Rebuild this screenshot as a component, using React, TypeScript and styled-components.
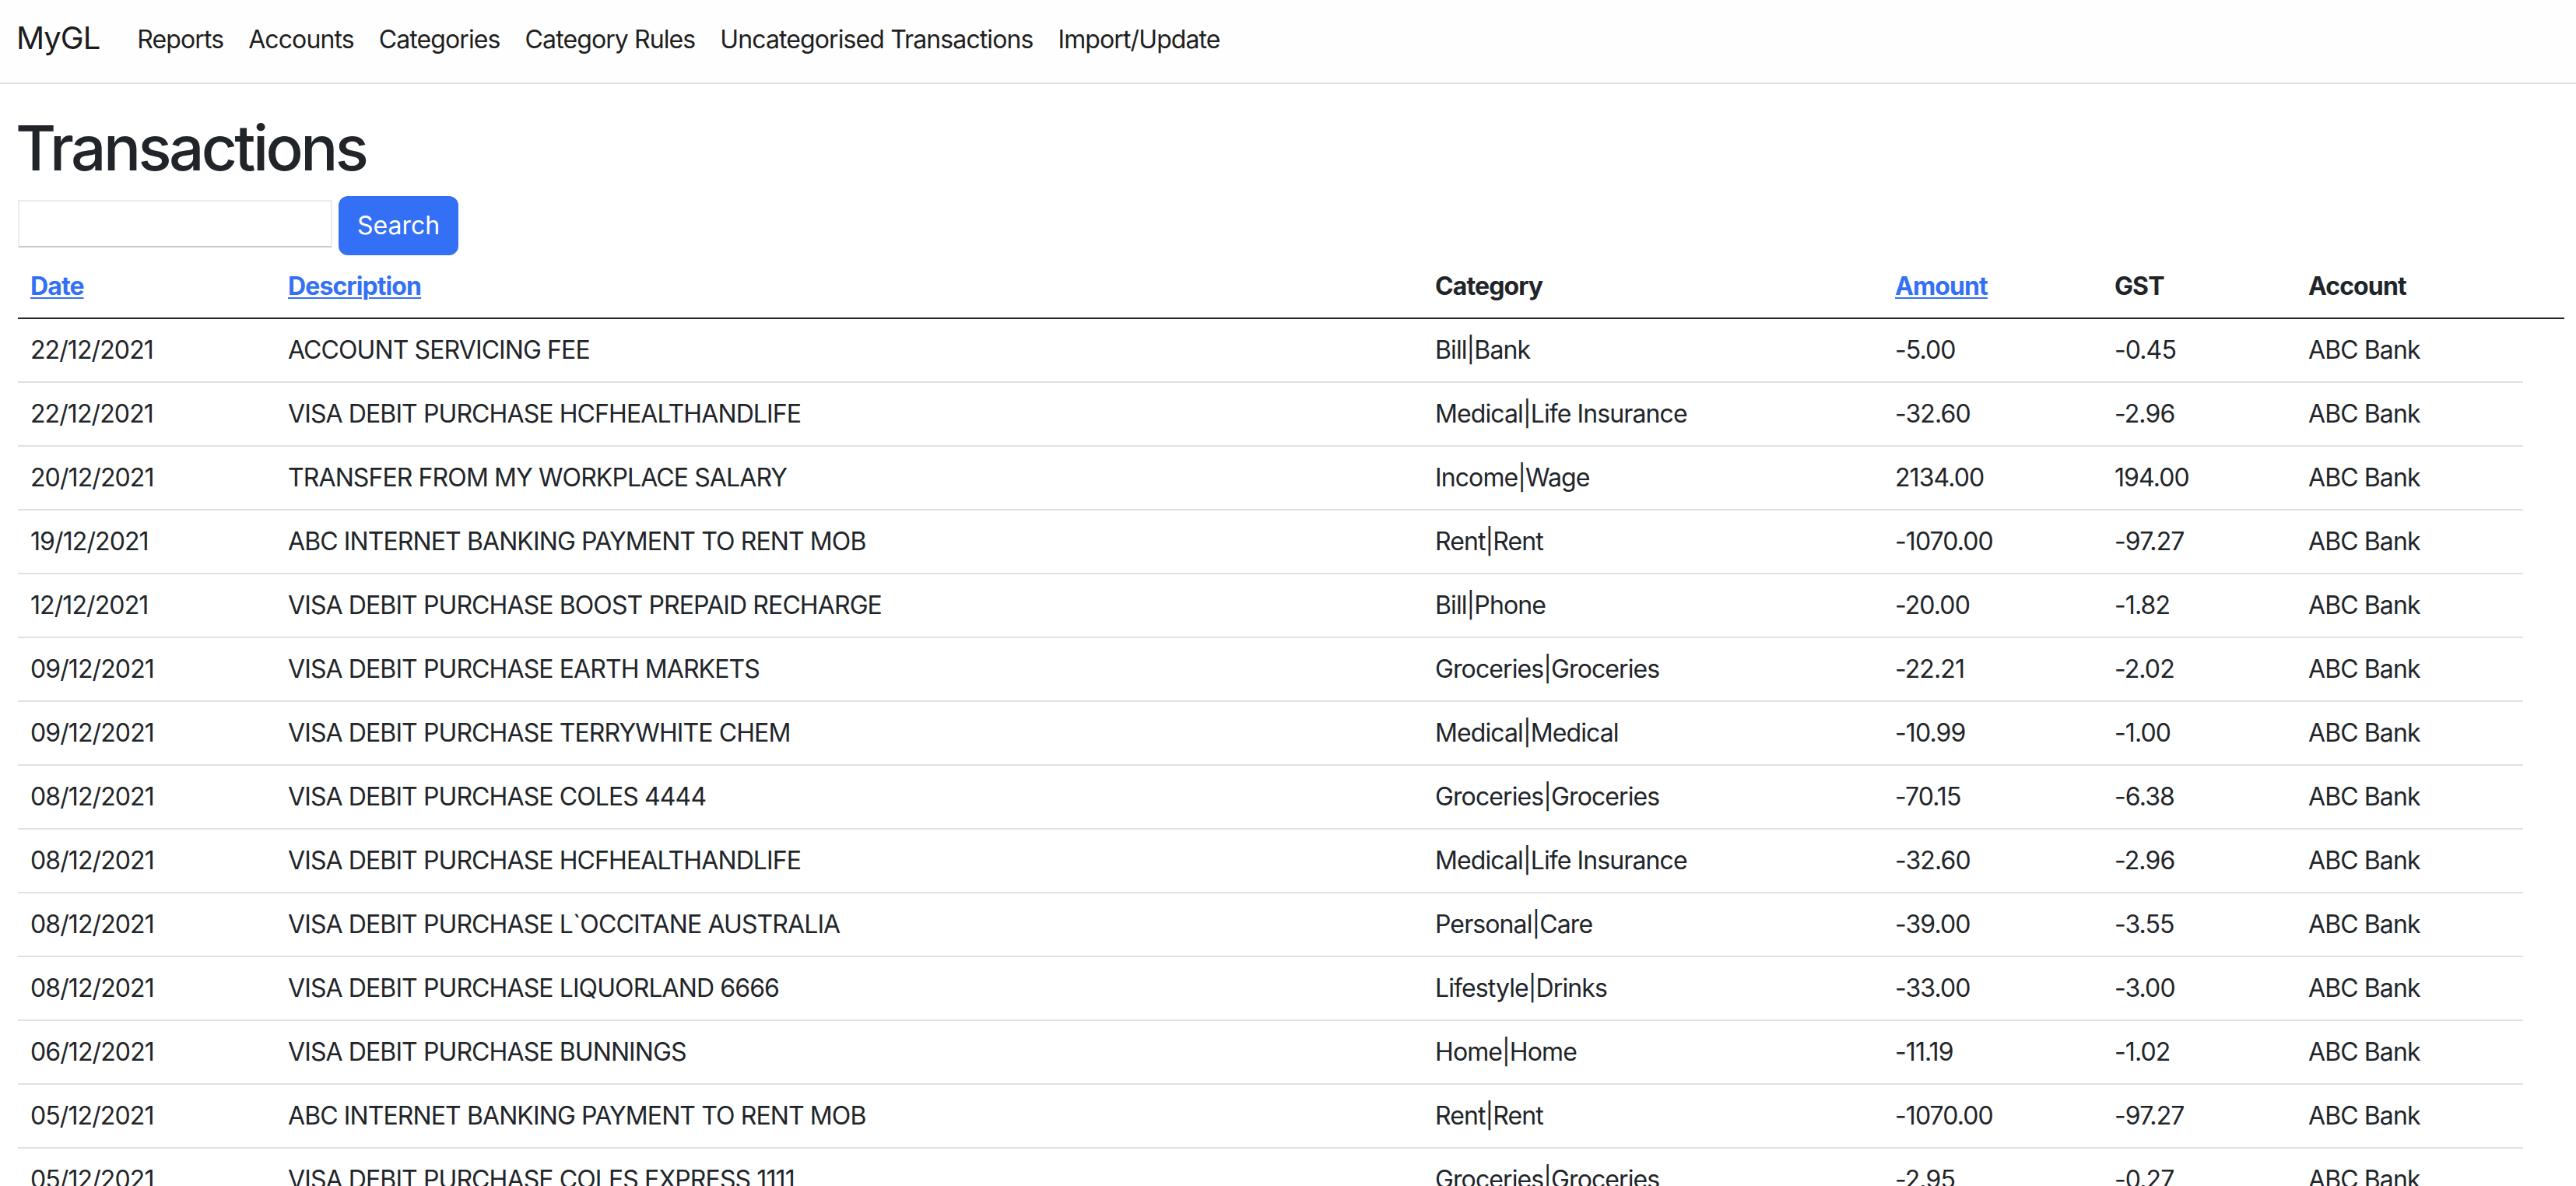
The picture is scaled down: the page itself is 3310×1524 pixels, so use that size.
import React from "react";
import styled, { createGlobalStyle } from "styled-components";

interface Transaction {
  date: string;
  description: string;
  category: string;
  amount: string;
  gst: string;
  account: string;
}

const transactions: Transaction[] = [
  { date: "22/12/2021", description: "ACCOUNT SERVICING FEE", category: "Bill|Bank", amount: "-5.00", gst: "-0.45", account: "ABC Bank" },
  { date: "22/12/2021", description: "VISA DEBIT PURCHASE HCFHEALTHANDLIFE", category: "Medical|Life Insurance", amount: "-32.60", gst: "-2.96", account: "ABC Bank" },
  { date: "20/12/2021", description: "TRANSFER FROM MY WORKPLACE SALARY", category: "Income|Wage", amount: "2134.00", gst: "194.00", account: "ABC Bank" },
  { date: "19/12/2021", description: "ABC INTERNET BANKING PAYMENT TO RENT MOB", category: "Rent|Rent", amount: "-1070.00", gst: "-97.27", account: "ABC Bank" },
  { date: "12/12/2021", description: "VISA DEBIT PURCHASE BOOST PREPAID RECHARGE", category: "Bill|Phone", amount: "-20.00", gst: "-1.82", account: "ABC Bank" },
  { date: "09/12/2021", description: "VISA DEBIT PURCHASE EARTH MARKETS", category: "Groceries|Groceries", amount: "-22.21", gst: "-2.02", account: "ABC Bank" },
  { date: "09/12/2021", description: "VISA DEBIT PURCHASE TERRYWHITE CHEM", category: "Medical|Medical", amount: "-10.99", gst: "-1.00", account: "ABC Bank" },
  { date: "08/12/2021", description: "VISA DEBIT PURCHASE COLES 4444", category: "Groceries|Groceries", amount: "-70.15", gst: "-6.38", account: "ABC Bank" },
  { date: "08/12/2021", description: "VISA DEBIT PURCHASE HCFHEALTHANDLIFE", category: "Medical|Life Insurance", amount: "-32.60", gst: "-2.96", account: "ABC Bank" },
  { date: "08/12/2021", description: "VISA DEBIT PURCHASE L`OCCITANE AUSTRALIA", category: "Personal|Care", amount: "-39.00", gst: "-3.55", account: "ABC Bank" },
  { date: "08/12/2021", description: "VISA DEBIT PURCHASE LIQUORLAND 6666", category: "Lifestyle|Drinks", amount: "-33.00", gst: "-3.00", account: "ABC Bank" },
  { date: "06/12/2021", description: "VISA DEBIT PURCHASE BUNNINGS", category: "Home|Home", amount: "-11.19", gst: "-1.02", account: "ABC Bank" },
  { date: "05/12/2021", description: "ABC INTERNET BANKING PAYMENT TO RENT MOB", category: "Rent|Rent", amount: "-1070.00", gst: "-97.27", account: "ABC Bank" },
  { date: "05/12/2021", description: "VISA DEBIT PURCHASE COLES EXPRESS 1111", category: "Groceries|Groceries", amount: "-2.95", gst: "-0.27", account: "ABC Bank" },
];

const navLinks = [
  "Reports",
  "Accounts",
  "Categories",
  "Category Rules",
  "Uncategorised Transactions",
  "Import/Update",
];

// column widths measured from the reference (page is rendered at 2x)
const columns = [331, 1474, 591, 282, 249, 292, 53];

const App: React.FC = () => {
  return (
    <>
      <GlobalStyle />
      <NavBar>
        <Brand href="#">MyGL</Brand>
        <NavList>
          {navLinks.map((link) => (
            <NavItem key={link}>
              <NavLink href="#">{link}</NavLink>
            </NavItem>
          ))}
        </NavList>
      </NavBar>

      <Main>
        <Title>Transactions</Title>
        <SearchForm onSubmit={(e) => e.preventDefault()}>
          <SearchInput type="text" />
          <SearchButton type="submit">Search</SearchButton>
        </SearchForm>

        <Table>
          <colgroup>
            {columns.map((w, i) => (
              <col key={i} style={{ width: w }} />
            ))}
          </colgroup>
          <thead>
            <tr>
              <HeadCell>
                <SortLink href="#">Date</SortLink>
              </HeadCell>
              <HeadCell>
                <SortLink href="#">Description</SortLink>
              </HeadCell>
              <HeadCell>Category</HeadCell>
              <HeadCell>
                <SortLink href="#">Amount</SortLink>
              </HeadCell>
              <HeadCell>GST</HeadCell>
              <HeadCell>Account</HeadCell>
              <HeadCell />
            </tr>
          </thead>
          <tbody>
            {transactions.map((t, index) => (
              <tr key={index}>
                <Cell>{t.date}</Cell>
                <Cell>{t.description}</Cell>
                <Cell>{t.category}</Cell>
                <Cell>{t.amount}</Cell>
                <Cell>{t.gst}</Cell>
                <Cell>{t.account}</Cell>
              </tr>
            ))}
          </tbody>
        </Table>
      </Main>
    </>
  );
};

export default App;

const GlobalStyle = createGlobalStyle`
  html, body {
    margin: 0;
    padding: 0;
    background: #ffffff;
  }

  body {
    font-family: Inter, "Noto Sans", "Liberation Sans", sans-serif;
    font-size: 32px;
    line-height: 1.5;
    letter-spacing: -0.028em;
    color: #212529;
  }

  * {
    box-sizing: border-box;
  }
`;

const NavBar = styled.nav`
  display: flex;
  align-items: center;
  height: 108px;
  padding: 0 23px 4px 21px;
  background: #fefefe;
  border-bottom: 2px solid #dee2e6;
`;

const Brand = styled.a`
  font-size: 40px;
  line-height: 60px;
  letter-spacing: -0.025em;
  color: #1c1c1e;
  text-decoration: none;
  margin-right: 32px;
  margin-bottom: 4px;
`;

const NavList = styled.ul`
  display: flex;
  list-style: none;
  margin: 0;
  padding: 0;
`;

const NavItem = styled.li`
  display: block;
`;

const NavLink = styled.a`
  display: block;
  padding: 0 16px;
  font-size: 32px;
  line-height: 48px;
  color: #1f1f1f;
  text-decoration: none;
`;

const Main = styled.main`
  padding: 34px 16px 0 23px;
`;

const Title = styled.h1`
  margin: 0 0 14px -3px;
  font-size: 80px;
  line-height: 96px;
  font-weight: 500;
  letter-spacing: -0.045em;
  color: #212529;
`;

const SearchForm = styled.form`
  display: flex;
  align-items: center;
  gap: 8px;
  margin: 0;
`;

const SearchInput = styled.input`
  width: 404px;
  height: 61px;
  margin-bottom: 5px;
  padding: 2px 4px;
  font: inherit;
  border: 2px solid #ececec;
  border-bottom-color: #c9c9c9;
  border-radius: 0;
  background: #ffffff;
  outline: none;
`;

const SearchButton = styled.button`
  height: 76px;
  padding: 0 22px;
  font: inherit;
  font-size: 32px;
  color: #ffffff;
  background: #3470f5;
  border: 2px solid #3470f5;
  border-radius: 12px;
  cursor: pointer;
`;

const Table = styled.table`
  width: 3271px;
  table-layout: fixed;
  border-collapse: collapse;
  color: #212529;
`;

const HeadCell = styled.th`
  padding: 16px;
  font-size: 32px;
  line-height: 48px;
  font-weight: 700;
  text-align: left;
  border-bottom: 2px solid #212529;
`;

const SortLink = styled.a`
  color: #3470f5;
  text-decoration: underline;
  text-underline-offset: 3px;
  text-decoration-thickness: 2px;
`;

const Cell = styled.td`
  padding: 16px;
  font-size: 32px;
  line-height: 48px;
  white-space: nowrap;
  border-bottom: 2px solid #dee2e6;
`;
